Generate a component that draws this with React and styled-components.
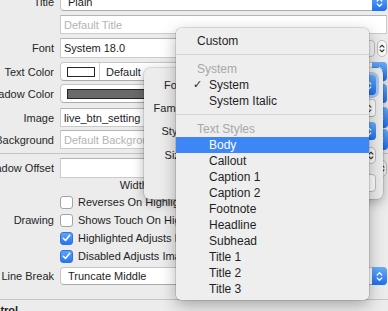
import React from 'react';
import styled, { createGlobalStyle } from 'styled-components';

const Global = createGlobalStyle`
  html, body { margin: 0; padding: 0; background: #ececec; }
  body { font-family: "Liberation Sans", Arial, sans-serif; }
  #root { width: 388px; height: 311px; overflow: hidden; position: relative; }
`;

const Inspector = styled.div`
  display: flex;
  flex-direction: column;
  width: 387px;
  font-size: 11px;
  color: #1d1d1d;
`;

const Row = styled.div`
  display: grid;
  grid-template-columns: 54px 1fr;
  column-gap: 6px;
  align-items: center;
  height: ${p => p.$h}px;
  margin-top: ${p => p.$mt}px;
  flex-shrink: 0;
`;

const Label = styled.div`
  display: flex;
  justify-content: flex-end;
  white-space: nowrap;
  min-width: 0;
  color: #262626;
`;

const PopUp = styled.div`
  height: ${p => (p.$h ? `${p.$h}px` : '100%')};
  box-sizing: border-box;
  display: flex;
  align-items: stretch;
  background: #fff;
  border: 1px solid #c6c6c6;
  border-bottom-color: #acacac;
  border-radius: 4px;
  min-width: 0;
`;

const PopText = styled.div`
  flex: 1;
  display: flex;
  align-items: center;
  padding-left: ${p => p.$pl ?? 7}px;
  white-space: nowrap;
  overflow: hidden;
  color: ${p => (p.$placeholder ? '#b3b3b3' : '#1d1d1d')};
`;

const BlueStep = styled.div`
  width: 15px;
  flex-shrink: 0;
  margin: -1px -1px -1px 0;
  border-radius: 0 4px 4px 0;
  background: linear-gradient(#69aefa, #1f70ef);
  display: flex;
  align-items: center;
  justify-content: center;
  box-shadow: ${p => (p.$focus ? '0 0 0 3px rgba(90,155,245,0.45)' : 'none')};
`;

const PlainStep = styled.div`
  width: 12px;
  flex-shrink: 0;
  display: flex;
  align-items: center;
  justify-content: center;
`;

const Field = styled.div`
  height: 100%;
  box-sizing: border-box;
  background: #fff;
  border: 1px solid #cbcbcb;
  border-top-color: #b4b4b4;
  display: flex;
  align-items: center;
  padding-left: 3px;
  white-space: nowrap;
  overflow: hidden;
  flex: 1;
  min-width: 0;
  color: ${p => (p.$placeholder ? '#b3b3b3' : '#1d1d1d')};
`;

const Combo = styled.div`
  height: 100%;
  display: flex;
  min-width: 0;
`;

const Group = styled.div`
  height: 100%;
  display: flex;
  align-items: center;
  gap: 2px;
  min-width: 0;
`;

const TButton = styled.div`
  width: 13px;
  height: 17px;
  box-sizing: border-box;
  border: 1px solid #bdbdbd;
  border-radius: 4px;
  background: #f4f4f4;
  flex-shrink: 0;
`;

const SmallStep = styled.div`
  width: 10px;
  height: 17px;
  box-sizing: border-box;
  border: 1px solid #bdbdbd;
  border-radius: 5px;
  background: #fafafa;
  display: flex;
  align-items: center;
  justify-content: center;
  flex-shrink: 0;
`;

const ColorPart = styled.div`
  width: ${p => (p.$wide ? 'auto' : '39px')};
  flex: ${p => (p.$wide ? 1 : 'none')};
  border-right: ${p => (p.$wide ? 'none' : '1px solid #d0d0d0')};
  display: flex;
  align-items: center;
  padding: 0 ${p => (p.$wide ? 7 : 4)}px 0 6px;
  box-sizing: border-box;
`;

const Swatch = styled.div`
  height: 8px;
  flex: 1;
  border: 1px solid #262626;
  background: ${p => p.$color};
`;

const Separator = styled.div`
  height: 1px;
  background: #c4c4c4;
  margin-top: ${p => p.$mt}px;
  width: 388px;
  flex-shrink: 0;
`;

const Offset = styled.div`
  display: grid;
  grid-template-columns: 1fr 1fr;
  column-gap: 8px;
  height: 100%;
`;

const SubLabel = styled.div`
  display: flex;
  justify-content: center;
  padding-right: 12px;
  font-size: 11px;
  color: #262626;
`;

const CheckLine = styled.div`
  display: flex;
  align-items: center;
  gap: 5px;
  white-space: nowrap;
  min-width: 0;
`;

const Box = styled.div`
  width: 13px;
  height: 13px;
  box-sizing: border-box;
  border-radius: 3px;
  flex-shrink: 0;
  border: 1px solid ${p => (p.$on ? '#2f74e0' : '#a3a3a3')};
  background: ${p => (p.$on ? 'linear-gradient(#5fa4fa, #2675f0)' : '#fff')};
  display: flex;
  align-items: center;
  justify-content: center;
`;

const SectionTitle = styled.div`
  margin-top: 4px;
  margin-left: -21px;
  font-weight: bold;
  font-size: 11px;
  color: #1d1d1d;
`;

/* Popover */
const Popover = styled.div`
  position: absolute;
  left: 144px;
  top: 68px;
  width: 239px;
  height: 131px;
  box-sizing: border-box;
  background: #ececec;
  border-radius: 6px;
  box-shadow: 0 0 0 0.5px rgba(0, 0, 0, 0.18), 0 3px 12px rgba(0, 0, 0, 0.3);
  padding: 6px 7px 0 6px;
  display: flex;
  flex-direction: column;
  font-size: 11px;
`;

const PRow = styled.div`
  display: grid;
  grid-template-columns: 36px 1fr;
  column-gap: 6px;
  align-items: center;
  height: ${p => p.$h}px;
  margin-top: ${p => p.$mt}px;
  flex-shrink: 0;
`;

const ButtonRow = styled.div`
  display: flex;
  justify-content: flex-end;
  margin-top: 10px;
`;

const PushButton = styled.div`
  width: 56px;
  height: 18px;
  box-sizing: border-box;
  border: 1px solid #bdbdbd;
  border-radius: 4px;
  background: #fff;
`;

/* Menu */
const Menu = styled.div`
  position: absolute;
  left: 176px;
  top: 28px;
  width: 193px;
  box-sizing: border-box;
  background: #eeeeee;
  border-radius: 5px;
  padding: 5px 0 3px;
  box-shadow: 0 0 0 0.5px rgba(0, 0, 0, 0.22), 0 5px 16px rgba(0, 0, 0, 0.3);
  font-size: 12px;
`;

const Item = styled.div`
  position: relative;
  height: 16px;
  line-height: 16px;
  padding-left: ${p => (p.$indent ? 33 : 21)}px;
  color: ${p => (p.$header ? '#a8a8a8' : p.$active ? '#fff' : '#1f1f1f')};
  background: ${p => (p.$active ? '#3e86f6' : 'transparent')};
  white-space: nowrap;
`;

const Tick = styled.span`
  position: absolute;
  left: 17px;
  top: 0;
  font-family: "DejaVu Sans", sans-serif;
  font-size: 11px;
`;

const MenuSep = styled.div`
  height: 1px;
  background: #d4d4d4;
  margin: 5px 0 6px;
`;

const Chevrons = ({ color = '#fff', w = 7, h = 11 }) => (
  <svg width={w} height={h} viewBox="0 0 7 11" fill="none" stroke={color} strokeWidth="1.3" strokeLinecap="round" strokeLinejoin="round">
    <polyline points="1.2,4 3.5,1.7 5.8,4" />
    <polyline points="1.2,7 3.5,9.3 5.8,7" />
  </svg>
);

const Check = () => (
  <svg width="9" height="8" viewBox="0 0 9 8" fill="none" stroke="#fff" strokeWidth="1.6" strokeLinecap="round" strokeLinejoin="round">
    <polyline points="1.3,4.3 3.5,6.5 7.7,1.3" />
  </svg>
);

const Blue = ({ focus }) => (
  <BlueStep $focus={focus}>
    <Chevrons />
  </BlueStep>
);

const Stepper = () => (
  <SmallStep>
    <Chevrons color="#333" w={6} h={11} />
  </SmallStep>
);

export default function App() {
  const menu = [
    { t: 'Custom' },
    { sep: true },
    { t: 'System', header: true },
    { t: 'System', indent: true, checked: true },
    { t: 'System Italic', indent: true },
    { sep: true },
    { t: 'Text Styles', header: true },
    { t: 'Body', indent: true, active: true },
    { t: 'Callout', indent: true },
    { t: 'Caption 1', indent: true },
    { t: 'Caption 2', indent: true },
    { t: 'Footnote', indent: true },
    { t: 'Headline', indent: true },
    { t: 'Subhead', indent: true },
    { t: 'Title 1', indent: true },
    { t: 'Title 2', indent: true },
    { t: 'Title 3', indent: true },
  ];

  return (
    <>
      <Global />
      <Inspector>
        <Row $h={18} $mt={-7}>
          <Label>Title</Label>
          <PopUp>
            <PopText>Plain</PopText>
            <Blue />
          </PopUp>
        </Row>
        <Row $h={19} $mt={4}>
          <Label />
          <Field $placeholder>Default Title</Field>
        </Row>
        <Row $h={20} $mt={4}>
          <Label>Font</Label>
          <Group>
            <Field>System 18.0</Field>
            <TButton />
            <Stepper />
          </Group>
        </Row>
        <Row $h={19} $mt={4}>
          <Label>Text Color</Label>
          <PopUp>
            <ColorPart>
              <Swatch $color="#fff" />
            </ColorPart>
            <PopText $pl={6}>Default</PopText>
            <Blue />
          </PopUp>
        </Row>
        <Row $h={19} $mt={3}>
          <Label>Shadow Color</Label>
          <PopUp>
            <ColorPart $wide>
              <Swatch $color="#6a6a6a" />
            </ColorPart>
            <Blue />
          </PopUp>
        </Row>
        <Row $h={19} $mt={5}>
          <Label>Image</Label>
          <Combo>
            <Field>live_btn_setting</Field>
            <Blue />
          </Combo>
        </Row>
        <Row $h={19} $mt={3}>
          <Label>Background</Label>
          <Combo>
            <Field $placeholder>Default Background</Field>
            <Blue />
          </Combo>
        </Row>
        <Separator $mt={4} />
        <Row $h={20} $mt={4}>
          <Label>Shadow Offset</Label>
          <Offset>
            <Group>
              <Field />
              <Stepper />
            </Group>
            <Group>
              <Field />
              <Stepper />
            </Group>
          </Offset>
        </Row>
        <Row $h={10} $mt={1}>
          <Label />
          <Offset>
            <SubLabel>Width</SubLabel>
            <SubLabel>Height</SubLabel>
          </Offset>
        </Row>
        <Row $h={18} $mt={4}>
          <Label />
          <CheckLine>
            <Box />
            Reverses On Highlight
          </CheckLine>
        </Row>
        <Row $h={18} $mt={0}>
          <Label>Drawing</Label>
          <CheckLine>
            <Box />
            Shows Touch On Highlight
          </CheckLine>
        </Row>
        <Row $h={18} $mt={0}>
          <Label />
          <CheckLine>
            <Box $on>
              <Check />
            </Box>
            Highlighted Adjusts Image
          </CheckLine>
        </Row>
        <Row $h={18} $mt={0}>
          <Label />
          <CheckLine>
            <Box $on>
              <Check />
            </Box>
            Disabled Adjusts Image
          </CheckLine>
        </Row>
        <Row $h={18} $mt={2}>
          <Label>Line Break</Label>
          <PopUp>
            <PopText>Truncate Middle</PopText>
            <Blue />
          </PopUp>
        </Row>
        <Separator $mt={14} />
        <SectionTitle>Control</SectionTitle>
      </Inspector>

      <Popover>
        <PRow $h={22} $mt={0}>
          <Label>Font</Label>
          <PopUp $h={20}>
            <PopText />
            <Blue focus />
          </PopUp>
        </PRow>
        <PRow $h={18} $mt={3}>
          <Label>Family</Label>
          <PopUp>
            <PopText />
            <PlainStep>
              <Chevrons color="#444" w={6} h={11} />
            </PlainStep>
          </PopUp>
        </PRow>
        <PRow $h={18} $mt={5}>
          <Label>Style</Label>
          <PopUp>
            <PopText />
            <Blue />
          </PopUp>
        </PRow>
        <PRow $h={18} $mt={6}>
          <Label>Size</Label>
          <Group>
            <Field />
            <Stepper />
          </Group>
        </PRow>
        <ButtonRow>
          <PushButton />
        </ButtonRow>
      </Popover>

      <Menu>
        {menu.map((m, i) =>
          m.sep ? (
            <MenuSep key={i} />
          ) : (
            <Item key={i} $indent={m.indent} $header={m.header} $active={m.active}>
              {m.checked && <Tick>✓</Tick>}
              {m.t}
            </Item>
          )
        )}
      </Menu>
    </>
  );
}
